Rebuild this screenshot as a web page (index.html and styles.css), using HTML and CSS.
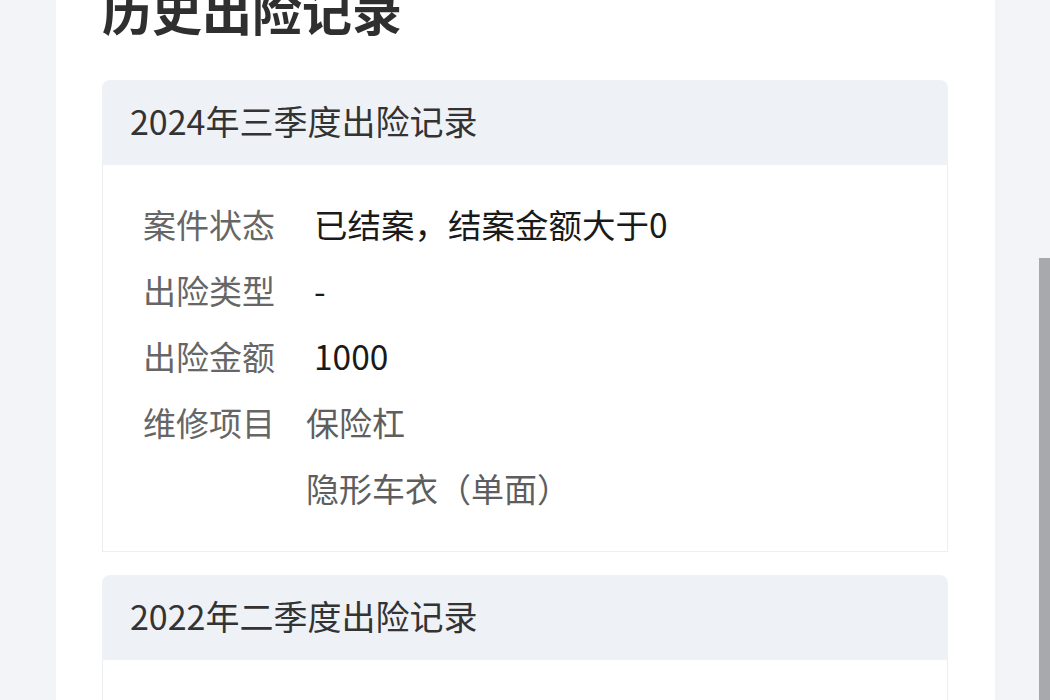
FILE: index.html
```html
<!DOCTYPE html>
<html lang="zh-CN">
<head>
  <meta charset="UTF-8" />
  <meta name="viewport" content="width=device-width, initial-scale=1" />
  <title>历史出险记录</title>
  <link rel="stylesheet" href="styles.css">
</head>
<body>

  <div class="page">
    <h1 class="title">历史出险记录</h1>

    <!-- 2024 Q3 -->
    <div class="record">
      <div class="record-head">2024年三季度出险记录</div>
      <div class="record-body">
        <div class="row">
          <span class="label">案件状态</span>
          <span class="value">已结案，结案金额大于0</span>
        </div>
        <div class="row">
          <span class="label">出险类型</span>
          <span class="value">-</span>
        </div>
        <div class="row">
          <span class="label">出险金额</span>
          <span class="value">1000</span>
        </div>
        <div class="row">
          <span class="label">维修项目</span>
          <div class="items">
            <span>保险杠</span>
            <span>隐形车衣（单面）</span>
          </div>
        </div>
      </div>
    </div>

    <!-- 2022 Q2 -->
    <div class="record">
      <div class="record-head">2022年二季度出险记录</div>
      <div class="record-body">
        <div class="row">
          <span class="label">案件状态</span>
          <span class="value">已结案，结案金额大于0</span>
        </div>
        <div class="row">
          <span class="label">出险类型</span>
          <span class="value">-</span>
        </div>
      </div>
    </div>
  </div>

  <!-- 滚动条 -->
  <div class="scroll-thumb"></div>

</body>
</html>
```

FILE: styles.css
```css
*{margin:0;padding:0;box-sizing:border-box}

html,body{height:100%;overflow:hidden}

body{
  background:#f3f4f8;
  font-family:"Noto Sans CJK SC","Noto Sans",sans-serif;
  position:relative
}

.page{
  width:939px;margin-left:56px;min-height:100%;
  background:#fff;
  padding:0 47px 0 46px
}

.title{
  margin-top:-16px;margin-bottom:46px;
  font-size:50px;line-height:50px;font-weight:700;
  color:#2f2f2f
}

/* === Tarjeta de registro === */
.record{margin-bottom:23px}
.record-head{
  height:85px;line-height:82px;padding:0 28px 3px;
  background:#eef1f6;border-radius:8px 8px 0 0;
  font-size:34px;color:#333
}
.record-body{
  border:1px solid #eceef1;border-top:none;
  padding:26px 0 30px 40px
}

.row{display:flex;align-items:flex-start;font-size:33px;line-height:66px;white-space:nowrap}
.label{width:132px;color:#666;flex-shrink:0}
.value{margin-left:39px;color:#1a1a1a;font-size:33.5px}
.items{margin-left:31px;display:flex;flex-direction:column;color:#5e5e5e}

/* barra de scroll */
.scroll-thumb{
  position:absolute;right:0;top:258px;
  width:11px;height:460px;background:#a8a9ad
}
```
